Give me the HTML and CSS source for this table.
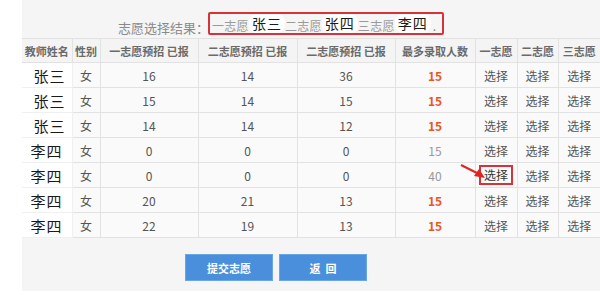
FILE: index.html
```html
<!DOCTYPE html>
<html lang="zh">
<head>
<meta charset="utf-8">
<link rel="stylesheet" href="styles.css">
</head>
<body>
<div class="page">
  <div class="panel">
    <div class="result">
      <span class="result-label">志愿选择结果：</span>
      <div class="result-box">
        <span class="lvl">一志愿</span><span class="pick">张三</span><span class="lvl">二志愿</span><span class="pick">张四</span><span class="lvl">三志愿</span><span class="pick">李四</span><span class="dot">.</span>
      </div>
    </div>
    <table class="grid">
      <colgroup>
        <col class="c-name"><col class="c-sex"><col class="c-q"><col class="c-q2"><col class="c-q"><col class="c-max"><col class="c-s"><col class="c-s2"><col class="c-s">
      </colgroup>
      <thead>
        <tr><th>教师姓名</th><th>性别</th><th>一志愿预招 已报</th><th>二志愿预招 已报</th><th>二志愿预招 已报</th><th>最多录取人数</th><th>一志愿</th><th>二志愿</th><th>三志愿</th></tr>
      </thead>
      <tbody>
        <tr><td class="name">张三</td><td>女</td><td>16</td><td>14</td><td>36</td><td class="hot">15</td><td>选择</td><td>选择</td><td>选择</td></tr>
        <tr><td class="name">张三</td><td>女</td><td>15</td><td>14</td><td>15</td><td class="hot">15</td><td>选择</td><td>选择</td><td>选择</td></tr>
        <tr><td class="name">张三</td><td>女</td><td>14</td><td>14</td><td>12</td><td class="hot">15</td><td>选择</td><td>选择</td><td>选择</td></tr>
        <tr><td class="name li">李四</td><td>女</td><td>0</td><td>0</td><td>0</td><td class="dim">15</td><td>选择</td><td>选择</td><td>选择</td></tr>
        <tr><td class="name li">李四</td><td>女</td><td>0</td><td>0</td><td>0</td><td class="dim">40</td><td class="mark"><svg class="arrow" width="30" height="20" viewBox="0 0 30 20"><line x1="2" y1="2" x2="20" y2="11" stroke="#e02424" stroke-width="2"/><polygon points="26,15 15,13 20,6" fill="#e02424"/></svg><span class="marked">选择</span></td><td>选择</td><td>选择</td></tr>
        <tr><td class="name li">李四</td><td>女</td><td>20</td><td>21</td><td>13</td><td class="hot">15</td><td>选择</td><td>选择</td><td>选择</td></tr>
        <tr><td class="name li">李四</td><td>女</td><td>22</td><td>19</td><td>13</td><td class="hot">15</td><td>选择</td><td>选择</td><td>选择</td></tr>
      </tbody>
    </table>
    <div class="actions">
      <button class="btn">提交志愿</button>
      <button class="btn">返&nbsp;&nbsp;回</button>
    </div>
  </div>
</div>
</body>
</html>
```

FILE: styles.css
```css
html, body {
  margin: 0;
  padding: 0;
  background: #ffffff;
}
body {
  font-family: "Noto Sans CJK SC", "Noto Sans", sans-serif;
  color: #555;
  width: 600px;
  height: 295px;
  overflow: hidden;
}
.page {
  padding-left: 22px;
}
.panel {
  background: #f5f5f5;
  height: 291px;
  padding-top: 12px;
  box-sizing: border-box;
}
.result {
  display: flex;
  align-items: flex-end;
  padding-left: 96px;
  height: 23px;
  white-space: nowrap;
}
.result-label {
  font-size: 13px;
  color: #8a8a8a;
  line-height: 18px;
  margin-bottom: -2px;
}
.result-box {
  display: flex;
  flex-shrink: 0;
  align-items: center;
  height: 23px;
  box-sizing: border-box;
  width: 236px;
  border: 2px solid #d8313a;
  border-radius: 2px;
  padding-left: 2px;
  margin-left: -1px;
  white-space: nowrap;
  overflow: hidden;
}
.lvl {
  font-size: 12px;
  letter-spacing: 0.3px;
  color: #9a9a9a;
  line-height: 16px;
  padding-top: 4px;
  flex-shrink: 0;
}
.pick {
  flex-shrink: 0;
  font-size: 14px;
  color: #1a1a1a;
  background: #ffffff;
  border-radius: 8px;
  padding: 0 3px;
  line-height: 19px;
  letter-spacing: 1px;
}
.dot {
  flex-shrink: 0;
  color: #888;
  font-size: 12px;
  padding-left: 2px;
  padding-top: 4px;
}
.grid {
  margin-top: 3px;
  border-collapse: collapse;
  table-layout: fixed;
  width: 578px;
  background: #fafafa;
}
.c-name { width: 50px; }
.c-sex { width: 28px; }
.c-q { width: 98px; }
.c-q2 { width: 99px; }
.c-max { width: 80px; }
.c-s { width: 42px; }
.c-s2 { width: 41px; }
.grid th, .grid td {
  border: 1px solid #e2e2e2;
  text-align: center;
  padding: 0;
  white-space: nowrap;
}
.grid th {
  height: 23px;
  font-size: 11px;
  font-weight: bold;
  color: #6a6a6a;
  background: #f4f4f4;
}
.grid td {
  height: 24px;
  font-size: 12px;
  color: #555;
}
.grid th:first-child, .grid td:first-child {
  border-left: none;
}
.grid th:last-child, .grid td:last-child {
  border-right: none;
}
.grid td.name {
  background: #ffffff;
  color: #1a1a1a;
  font-size: 15px;
  letter-spacing: 1px;
  text-align: right;
  padding-right: 6px;
  border-color: #f0f0f0;
}
.grid td.name.li {
  padding-right: 9px;
}
.grid td.hot {
  color: #e8561c;
  font-weight: bold;
}
.grid td.dim {
  color: #999;
}
.grid td.mark {
  position: relative;
}
.marked {
  display: inline-block;
  border: 2px solid #d8313a;
  padding: 0 3px;
  line-height: 16px;
  color: #333;
}
.arrow {
  position: absolute;
  left: -17px;
  top: 0px;
}
.actions {
  display: flex;
  gap: 6px;
  padding-left: 163px;
  margin-top: 16px;
}
.btn {
  width: 88px;
  height: 27px;
  background: #4a8fdb;
  border: 1px solid #6aa6e6;
  color: #ffffff;
  font-family: "Noto Sans CJK SC", sans-serif;
  font-size: 11px;
  font-weight: bold;
  padding: 0;
}
```
